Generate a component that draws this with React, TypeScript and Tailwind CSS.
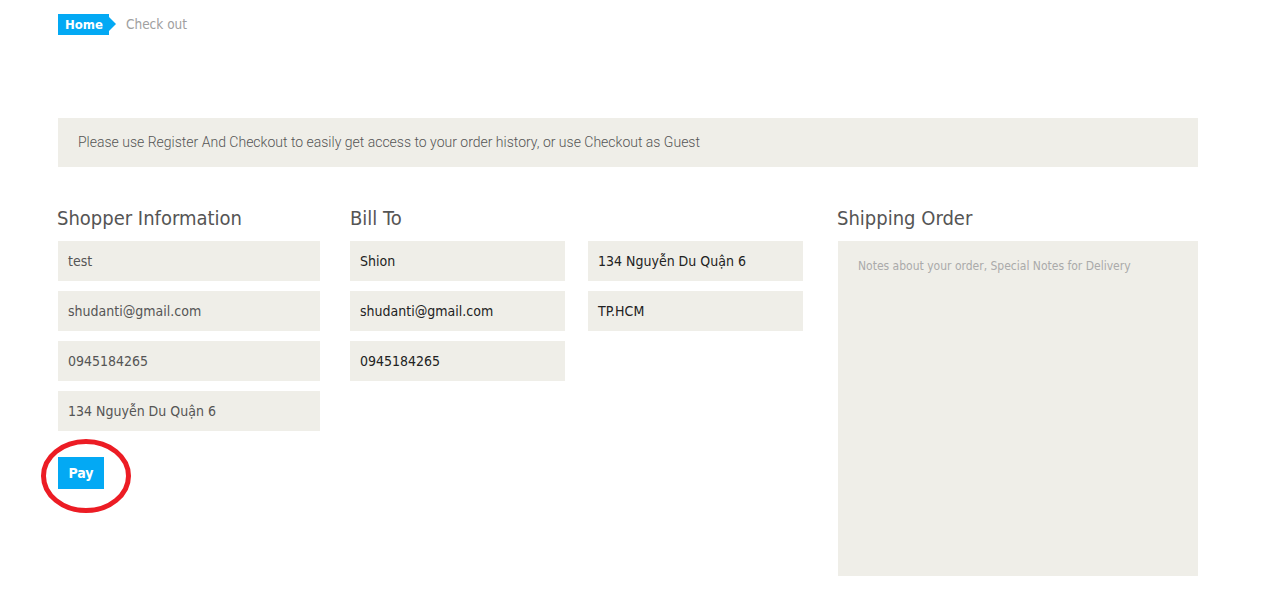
import React from 'react';

const field =
  'h-10 w-full bg-[#efeee8] px-[10px] flex items-center text-[14px] font-["DejaVu_Sans_Condensed","DejaVu_Sans",sans-serif]';

export default function App() {
  return (
    <div className="min-h-[615px] bg-white pl-[58px] pt-[14px] font-['DejaVu_Sans_Condensed','DejaVu_Sans',sans-serif]">
      {/* Breadcrumb */}
      <div className="flex items-center h-[21px]">
        <div className="relative h-[21px] bg-[#03a9f4] pl-[7px] pr-[6px] flex items-center text-white text-[13px] font-bold">
          Home
          <span className="absolute right-[-7px] top-[3px] w-0 h-0 border-y-[7.5px] border-y-transparent border-l-[7px] border-l-[#03a9f4]" />
        </div>
        <span className="ml-[17px] text-[13.5px] text-[#a0a0a0]">Check out</span>
      </div>

      {/* Notice */}
      <div className="mt-[83px] w-[1140px] h-[49px] bg-[#efeee8] flex items-center pl-[20px] text-[14px] text-[#555] font-['Roboto',sans-serif] font-light">
        Please use Register And Checkout to easily get access to your order history, or use Checkout as Guest
      </div>

      <div className="mt-[38px] flex w-[1140px]">
        {/* Shopper Information */}
        <div className="w-[262px] flex flex-col">
          <h2 className="text-[20px] leading-[26px] text-[#555] -ml-px">Shopper Information</h2>
          <div className="mt-[10px] flex flex-col gap-[10px] text-[#555]">
            <div className={field}>test</div>
            <div className={field}>shudanti@gmail.com</div>
            <div className={field}>0945184265</div>
            <div className={field}>134 Nguyễn Du Quận 6</div>
          </div>
          <div className="relative mt-[26px] w-[46px]">
            <button className="h-8 w-[46px] bg-[#03a9f4] text-white text-[14px] font-bold">Pay</button>
            <svg
              className="absolute left-[-18px] top-[-19px] pointer-events-none"
              width="92"
              height="76"
              viewBox="0 0 92 76"
            >
              <ellipse cx="46" cy="38" rx="42.5" ry="34.5" fill="none" stroke="#ec1c24" strokeWidth="5" />
            </svg>
          </div>
        </div>

        {/* Bill To */}
        <div className="ml-[30px] w-[453px] flex flex-col">
          <h2 className="text-[20px] leading-[26px] text-[#555]">Bill To</h2>
          <div className="mt-[10px] flex gap-[23px] text-[#222]">
            <div className="w-[215px] flex flex-col gap-[10px]">
              <div className={field}>Shion</div>
              <div className={field}>shudanti@gmail.com</div>
              <div className={field}>0945184265</div>
            </div>
            <div className="w-[215px] flex flex-col gap-[10px]">
              <div className={field}>134 Nguyễn Du Quận 6</div>
              <div className={field}>TP.HCM</div>
            </div>
          </div>
        </div>

        {/* Shipping Order */}
        <div className="ml-[35px] w-[360px] flex flex-col">
          <h2 className="text-[20px] leading-[26px] text-[#555] -ml-px">Shipping Order</h2>
          <div className="mt-[10px] h-[335px] bg-[#efeee8] px-[20px] pt-[16px] text-[12px] text-[#aaa]">
            Notes about your order, Special Notes for Delivery
          </div>
        </div>
      </div>
    </div>
  );
}
